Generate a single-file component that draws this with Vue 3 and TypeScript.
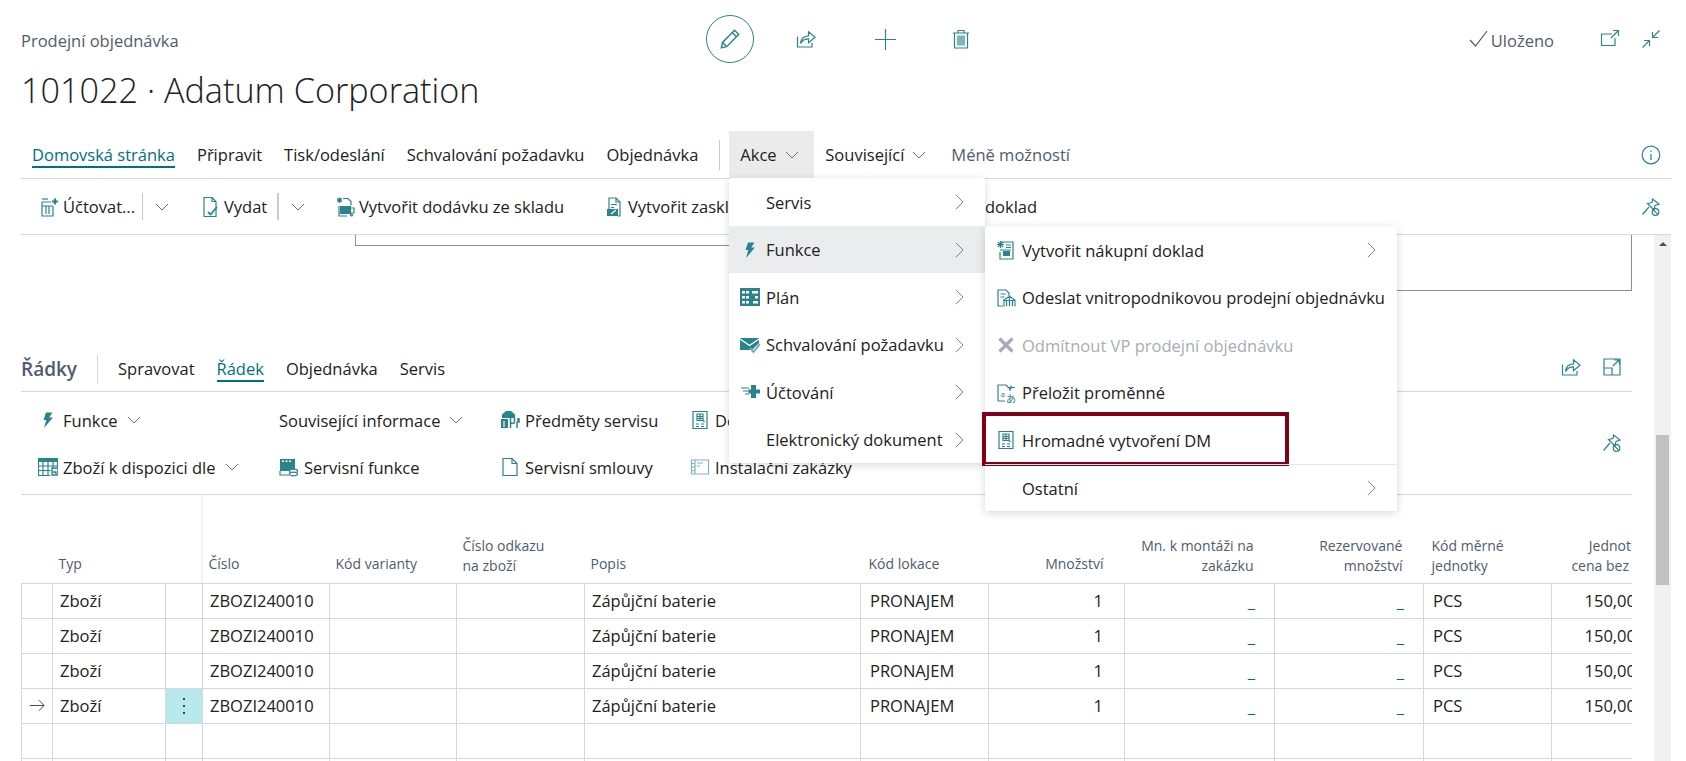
<script setup lang="ts">
const icons: Record<string, string> = {
  pencil: '<path d="M13.8 2.8l3.4 3.4L7.2 16.4l-4.4 1 1-4.5z"/><path d="M12 4.8l3.3 3.3M3.9 13l3.1 3.2"/>',
  share: '<path d="M1.500 7.500v10.500h14.500v-4"/><path d="M4.500 14.500c.4-4.800 3.600-7.400 8-7.600V2.800l6.500 5.400-6.500 5.400v-3.800c-3.400 0-6.200 1.300-8 4.700z"/>',
  plus: '<path d="M10 0v20M0 10h20"/>',
  trash: '<path d="M2 4h16M7 4V1.500h6V4M3.500 4v15h13V4M7 6.500v10M9 6.500v10M11 6.500v10M13 6.500v10"/>',
  check: '<path d="M1 11l5.500 6L18 2"/>',
  open: '<path d="M12 5H1.500v11.500H15V9"/><path d="M11 9l7-7M13 1.500h5.500V7"/>',
  collapse: '<path d="M18.500 1.500L11.500 8.500M11.500 3v5.500H17M1.500 18.500l7-7M3 11.500h5.500V17"/>',
  info: '<circle cx="10" cy="10" r="8.800"/><path d="M10 9v6M10 5.500v1.500"/>',
  pinoff: '<path d="M11.500 2l6.500 5-4 1.500-1 4.500-6.500-6.500 4.500-1z"/><path d="M8 10l-6.500 7.500"/><circle cx="14.500" cy="15" r="3.300"/><path d="M12.300 12.800l4.400 4.400"/>',
  expand: '<path d="M2 2h16v16H2zM2 11h8v7"/><path d="M11 9l6-6M12.500 2.800H17.300V7.500"/>',
  post: '<path d="M3 5h9M3 5v14h11V9"/><path d="M7 9v8M10 9v8M3 9h11"/><path d="M13 4.500h6M16 1.500v6" stroke-width="2.200"/><path d="M3 2h6"/>',
  ship: '<path d="M4 .5h8l4 4v15H4z"/><path d="M12 .5v4h4"/><path d="M8 15l2.500 2.500L17 10" stroke-width="1.800"/>',
  deliver: '<path d="M8 1.500h5l3 3v4M4 9v10h8"/><rect x="5" y="9" width="11" height="8" fill="#2b838b" stroke="none"/><path d="M4.500 .5v5.500M2 3.200h5M2.500 1.200l4 4M6.500 1.200l-4 4M16 11h3v5h-3"/><circle cx="16.500" cy="18" r="1"/>',
  whse: '<path d="M5 18V1h7l4 4v14h-2"/><path d="M12 1v4h4M7 7.500h6M7 10.500h3"/><rect x="3" y="12" width="11" height="7" fill="#2b838b" stroke="none"/><path d="M7 17l5-4" stroke="#fff"/>',
  bolt: '<path d="M8 2.500h6.500l-3.300 5h3.800L6 18l2.300-8H5.500z" fill="#2b838b" stroke="none"/>',
  plan: '<rect x="0" y="1" width="20" height="18" fill="#2b838b" stroke="none"/><g fill="#fff" stroke="none"><rect x="2" y="4" width="3" height="2.500"/><rect x="6" y="4" width="3" height="2.500"/><rect x="2" y="9" width="3" height="2.500"/><rect x="6" y="9" width="3" height="2.500"/><rect x="2" y="14" width="3" height="2.500"/><rect x="6" y="14" width="3" height="2.500"/><rect x="12" y="4" width="6" height="2.500"/><rect x="15" y="9" width="3" height="2.500"/><rect x="13" y="14" width="5" height="2.500"/></g>',
  approve: '<path d="M0 3h19v5l-7 7H0z" fill="#2b838b" stroke="none"/><path d="M0 4l9.500 6.500L19 4" stroke="#fff" stroke-width="1.300"/><path d="M10 13l3.500 4L20 9" stroke="#6fb4ba" stroke-width="2"/>',
  posting: '<path d="M1 6h8M3 9h6M5 12h4" stroke-width="1.200"/><path d="M11 3h5v4.500h4.500v4H16V16h-5v-4.500H8.500v-4H11z" fill="#2b838b" stroke="none"/>',
  newdoc: '<path d="M5 2h12v17H4v-7"/><path d="M10 5h5M10 7.500h5M4 10h11"/><rect x="7" y="11" width="7" height="5" fill="#2b838b" stroke="none"/><path d="M4.500 1v7M1 4.500h7M2 2l5 5M7 2L2 7" stroke-width="1.100"/>',
  intercompany: '<path d="M2 18V2h8l3 3v3M2 18h5"/><path d="M4.500 6h5M4.500 9h4"/><path d="M8 18.500v-6h11v6M13.500 12.500v-4M7 12.500l6.500-4 6 4" stroke-width="1.100"/><path d="M10.500 13v5M13.500 13v5M16.500 13v5" stroke-width="1.300"/>',
  cross: '<path d="M3.500 3.500l13 13M16.500 3.500l-13 13" stroke="#a7adb5" stroke-width="3.200"/>',
  translate: '<path d="M2 18V2h8l4 4v2M2 18h7"/><text x="4.500" y="14" font-size="8" font-family="Open Sans, sans-serif" fill="#2b838b" stroke="none">a</text><text x="10" y="19.500" font-size="10" font-family="Noto Sans CJK JP, sans-serif" fill="#2b838b" stroke="none">あ</text><path d="M15 2.500v4M13 4.500h6"/>',
  bulk: '<path d="M3 1.500h14v17H3z"/><path d="M7 4h6v6.500H7zM7 6.500h6M7 8.500h6M10 4v6.500M13 10.500l1.500 1.500M6 14h3M11 14h3M6 16.500h3M11 16.500h3"/>',
  avail: '<rect x="0" y="1" width="20" height="4" fill="#2b838b" stroke="none"/><path d="M0.500 5v13.500H12M0.500 9h19M.5 13.500h12M5 5v13.500M10 5v13.500M15 5v5M19.500 5v5"/><path d="M14 11h6v7h-6zM15 15h3v2" stroke-width="1.400"/>',
  service: '<rect x="1" y="2" width="15" height="12" fill="#2b838b" stroke="none"/><g fill="#fff" stroke="none"><rect x="3" y="3.500" width="2" height="1.500"/><rect x="6.500" y="3.500" width="2" height="1.500"/><rect x="10" y="3.500" width="2" height="1.500"/></g><path d="M1 14v4h9"/><ellipse cx="14.500" cy="14" rx="4" ry="1.800" fill="#fff"/><ellipse cx="14.500" cy="17" rx="4" ry="1.800" fill="#fff"/>',
  items: '<path d="M6 1L2 4.500V8h13V4.500L11 1z" fill="#2b838b" stroke="none"/><rect x="1" y="9" width="7" height="9" fill="#2b838b" stroke="none"/><path d="M10.500 8v10M14.500 8v3.500a2 2 0 0 1-4 0M18 8v3.500M17 12v6M19 8v4h-2" stroke-width="1.500"/><path d="M4 11v6" stroke="#fff"/>',
  contract: '<path d="M3 1.500h9l5 5v12H3z"/><path d="M12 1.500v5h5"/>',
  install: '<path d="M1.500 3h17v14h-17z" stroke="#7fb6ba"/><path d="M5 3v14M1.500 6.500H5M1.500 10H5M1.500 13.500H5M7 6h6M7 9h3" stroke="#7fb6ba"/>'
}

interface MenuRow { label: string; icon?: string; more?: boolean; disabled?: boolean; mark?: boolean; sep?: boolean }

const tabs = ['Domovská stránka', 'Připravit', 'Tisk/odeslání', 'Schvalování požadavku', 'Objednávka']
const lineTabs = ['Spravovat', 'Řádek', 'Objednávka', 'Servis']

const menuOne: MenuRow[] = [
  { label: 'Servis', more: true },
  { label: 'Funkce', icon: 'bolt', more: true },
  { label: 'Plán', icon: 'plan', more: true },
  { label: 'Schvalování požadavku', icon: 'approve', more: true },
  { label: 'Účtování', icon: 'posting', more: true },
  { label: 'Elektronický dokument', more: true }
]
const menuTwo: MenuRow[] = [
  { label: 'Vytvořit nákupní doklad', icon: 'newdoc', more: true },
  { label: 'Odeslat vnitropodnikovou prodejní objednávku', icon: 'intercompany' },
  { label: 'Odmítnout VP prodejní objednávku', icon: 'cross', disabled: true },
  { label: 'Přeložit proměnné', icon: 'translate' },
  { label: 'Hromadné vytvoření DM', icon: 'bulk', mark: true },
  { label: 'Ostatní', more: true, sep: true }
]
const lineActions = [
  { label: 'Funkce', icon: 'bolt', drop: true },
  { label: 'Související informace', drop: true },
  { label: 'Předměty servisu', icon: 'items' },
  { label: 'Dokumenty', icon: 'bulk' },
  { label: 'Zboží k dispozici dle', icon: 'avail', drop: true },
  { label: 'Servisní funkce', icon: 'service' },
  { label: 'Servisní smlouvy', icon: 'contract' },
  { label: 'Instalační zakázky', icon: 'install' }
]
const rows = [false, false, false, true]
</script>

<template>
  <div class="page">
    <header class="head">
      <div class="topline">
        <div class="doc-kind">Prodejní objednávka</div>
        <div class="doc-actions">
          <button class="round"><svg class="ic ic-24" viewBox="0 0 20 20" v-html="icons.pencil" /></button>
          <button class="flat"><svg class="ic" viewBox="0 0 20 20" v-html="icons.share" /></button>
          <button class="flat flat-plus"><svg class="ic ic-21" viewBox="0 0 20 20" v-html="icons.plus" /></button>
          <button class="flat"><svg class="ic" viewBox="0 0 20 20" v-html="icons.trash" /></button>
        </div>
        <div class="status">
          <svg class="ic ic-gray" viewBox="0 0 20 20" v-html="icons.check" />
          <span class="saved">Uloženo</span>
          <svg class="ic ic-open" viewBox="0 0 20 20" v-html="icons.open" />
          <svg class="ic" viewBox="0 0 20 20" v-html="icons.collapse" />
        </div>
      </div>
      <h1 class="title">101022 · Adatum Corporation</h1>

      <nav class="tabs">
        <span v-for="(t, i) in tabs" :key="t" class="tab"><span :class="{ active: i === 0 }">{{ t }}</span></span>
        <span class="tab-sep"></span>
        <span class="tab tab-open">Akce<svg class="chev" viewBox="0 0 14 8"><path d="M1 1l6 6 6-6" /></svg></span>
        <span class="tab">Související<svg class="chev" viewBox="0 0 14 8"><path d="M1 1l6 6 6-6" /></svg></span>
        <span class="tab tab-less">Méně možností</span>
        <svg class="ic ic-info" viewBox="0 0 20 20" v-html="icons.info" />
      </nav>

      <div class="cmdbar">
        <span class="cmd cmd-post"><svg class="ic" viewBox="0 0 20 20" v-html="icons.post" />Účtovat...</span>
        <span class="cmd-sep"></span><svg class="chev chev-split" viewBox="0 0 14 8"><path d="M1 1l6 6 6-6" /></svg>
        <span class="cmd cmd-ship"><svg class="ic" viewBox="0 0 20 20" v-html="icons.ship" />Vydat</span>
        <span class="cmd-sep cmd-sep-bold"></span><svg class="chev chev-split" viewBox="0 0 14 8"><path d="M1 1l6 6 6-6" /></svg>
        <span class="cmd cmd-deliver"><svg class="ic" viewBox="0 0 20 20" v-html="icons.deliver" />Vytvořit dodávku ze skladu</span>
        <span class="cmd cmd-whse"><svg class="ic" viewBox="0 0 20 20" v-html="icons.whse" />Vytvořit zaskladnění</span>
        <span class="cmd">doklad</span>
        <svg class="ic ic-pin" viewBox="0 0 20 20" v-html="icons.pinoff" />
      </div>
    </header>

    <div class="body">
      <main class="content">
        <div class="fields">
          <div class="fbox fbox-a"></div>
          <div class="fbox fbox-b"></div>
        </div>

        <div class="lines-head">
          <span class="lines-title">Řádky</span>
          <span class="lines-sep"></span>
          <span v-for="(t, i) in lineTabs" :key="t" class="tab"><span :class="{ active: i === 1 }">{{ t }}</span></span>
          <span class="lines-tools">
            <svg class="ic" viewBox="0 0 20 20" v-html="icons.share" />
            <svg class="ic" viewBox="0 0 20 20" v-html="icons.expand" />
          </span>
        </div>

        <div class="lines-cmds">
          <div class="lines-grid">
            <span v-for="a in lineActions" :key="a.label" class="la">
              <svg v-if="a.icon" class="ic" viewBox="0 0 20 20" v-html="icons[a.icon]" />
              {{ a.label }}<svg v-if="a.drop" class="chev chev-la" viewBox="0 0 14 8"><path d="M1 1l6 6 6-6" /></svg>
            </span>
          </div>
          <svg class="ic ic-pin" viewBox="0 0 20 20" v-html="icons.pinoff" />
        </div>

        <div class="grid-wrap">
          <table class="grid">
            <colgroup>
              <col class="c31" /><col class="c113" /><col class="c37" /><col class="c127" /><col class="c127" /><col class="c128" />
              <col class="c276" /><col class="c128" /><col class="c136" /><col class="c150" /><col class="c149" /><col class="c128" /><col class="c117" />
            </colgroup>
            <thead>
              <tr>
                <th></th><th>Typ</th><th class="freeze"></th>
                <th>Číslo</th><th>Kód varianty</th><th class="two">Číslo odkazu<br />na zboží</th>
                <th>Popis</th><th>Kód lokace</th>
                <th class="r">Množství</th><th class="r two">Mn. k montáži na<br />zakázku</th><th class="r two">Rezervované<br />množství</th>
                <th class="two">Kód měrné<br />jednotky</th><th class="r r-clip two">Jednotková<br />cena bez DPH</th>
              </tr>
            </thead>
            <tbody>
              <tr v-for="(cur, i) in rows" :key="i">
                <td class="mark">
                  <svg v-if="cur" class="arrow" viewBox="0 0 18 14"><path d="M1 7h16M11 1l6 6-6 6" /></svg>
                </td>
                <td>Zboží</td>
                <td :class="{ dots: cur }"><svg v-if="cur" class="kebab" viewBox="0 0 4 20"><circle cx="2" cy="3" r="1.100" /><circle cx="2" cy="10" r="1.100" /><circle cx="2" cy="17" r="1.100" /></svg></td>
                <td>ZBOZI240010</td><td></td><td></td>
                <td>Zápůjční baterie</td><td class="wide-pad">PRONAJEM</td>
                <td class="r">1</td><td class="r link">_</td><td class="r link">_</td>
                <td class="wide-pad">PCS</td><td class="r price">150,00</td>
              </tr>
              <tr v-for="n in 2" :key="'e' + n"><td v-for="m in 13" :key="m"></td></tr>
            </tbody>
          </table>
        </div>
      </main>
      <aside class="scrollbar">
        <i class="scroll-up"></i>
        <i class="scroll-thumb"></i>
      </aside>
    </div>

    <div class="menu menu-one">
      <div v-for="(m, i) in menuOne" :key="m.label" class="mi" :class="{ hot: i === 1 }">
        <svg v-if="m.icon" class="ic" viewBox="0 0 20 20" v-html="icons[m.icon]" /><span v-else class="ic"></span>
        <span>{{ m.label }}</span>
        <svg v-if="m.more" class="more" viewBox="0 0 10 18"><path d="M1 1l8 8-8 8" /></svg>
      </div>
    </div>
    <div class="menu menu-two">
      <div v-for="m in menuTwo" :key="m.label" class="mi" :class="{ off: m.disabled, sep: m.sep }">
        <svg v-if="m.icon" class="ic" viewBox="0 0 20 20" v-html="icons[m.icon]" /><span v-else class="ic"></span>
        <span>{{ m.label }}</span>
        <svg v-if="m.more" class="more" viewBox="0 0 10 18"><path d="M1 1l8 8-8 8" /></svg>
        <span v-if="m.mark" class="callout"></span>
      </div>
    </div>
  </div>
</template>

<style>
body { margin: 0; background: #fff; }
</style>

<style scoped>
.page {
  position: relative;
  width: 1686px;
  height: 761px;
  overflow: hidden;
  background: #fff;
  color: #212121;
  font-family: "Open Sans", "Liberation Sans", sans-serif;
  font-size: 16.5px;
  display: flex;
  flex-direction: column;
}
button { padding: 0; border: 0; background: none; }
.ic { width: 20px; height: 20px; flex: none; fill: none; stroke: #2b838b; stroke-width: 1.2; }
.ic-24 { width: 24px; height: 24px; }
.ic-21 { width: 21px; height: 21px; stroke-width: 1.1; }
.ic-gray { stroke: #505c6d; }
.head { flex: none; }
.topline { display: flex; align-items: center; height: 48px; padding: 15px 25px 0 21px; }
.doc-kind { width: 685px; color: #505c6d; padding-top: 3px; }
.doc-actions { display: flex; align-items: center; gap: 28px; }
.round { width: 48px; height: 48px; border: 1px solid #2b838b; border-radius: 50%; display: flex; align-items: center; justify-content: center; box-sizing: border-box; }
.flat { width: 48px; height: 48px; display: flex; align-items: center; justify-content: center; }
.flat-plus { margin: 0 0 0 3px; }
.status { margin-left: auto; display: flex; align-items: center; }
.saved { color: #505c6d; margin-left: 2px; padding-top: 3px; }
.ic-open { margin: 0 21px 0 46px; }
.title { margin: 4px 0 18px 21px; font-size: 34.2px; line-height: 46px; font-weight: 300; color: #212121; }
.tabs { display: flex; align-items: center; height: 47px; margin: 0 15px 0 21px; border-bottom: 1px solid #d5d7dd; }
.tab { padding: 0 11px; display: flex; align-items: center; white-space: pre; line-height: 22px; }
.active { color: #00717c; box-shadow: 0 2px 0 #00717c; display: block; }
.tab-sep { width: 1px; height: 30px; background: #c8cad0; margin: 0 9px 0 10px; }
.tab-open { align-self: stretch; background: #ebebec; width: 85px; box-sizing: border-box; }
.tab-less { color: #505c6d; margin-left: 3px; }
.chev { width: 14px; height: 8px; flex: none; fill: none; stroke: #707070; stroke-width: 1; margin-left: 8px; }
.ic-info { margin: 0 10px 0 auto; }
.cmdbar { display: flex; align-items: center; height: 55px; margin: 0 15px 0 21px; padding-left: 18px; border-bottom: 1px solid #d5d7dd; white-space: nowrap; }
.cmd { display: flex; align-items: center; gap: 4px; flex: none; }
.cmd-post { flex: 0 0 103px; }
.cmd-ship { flex: 0 0 77px; margin-left: 31px; }
.cmd-sep { width: 1px; height: 27px; background: #c8cad0; flex: none; }
.cmd-sep-bold { width: 2px; }
.chev-split { margin-left: 12px; }
.cmd-deliver { flex: 0 0 269px; margin-left: 30px; }
.cmd-whse { flex: 0 0 381px; }
.ic-pin { margin: 0 10px 0 auto; }
.body { flex: 1; display: flex; min-height: 0; margin-right: 15px; }
.content { width: 1611px; margin-left: 21px; flex: none; }
.fields { height: 111px; display: flex; align-items: flex-start; }
.fbox { box-sizing: border-box; border-right: 0; border-bottom: 1px solid #8a8f9c; }
.fbox-a { width: 400px; height: 11px; margin-left: 334px; border-left: 1px solid #8a8f9c; }
.fbox-b { flex: 1; height: 56px; margin-left: 200px; border-right: 1px solid #8a8f9c; }
.lines-head { display: flex; align-items: center; height: 45px; }
.lines-title { font-weight: 600; font-size: 19px; color: #505c6d; width: 76px; }
.lines-sep { width: 1px; height: 28px; background: #d5d7dd; margin-right: 9px; }
.lines-tools { margin-left: auto; display: flex; gap: 21px; padding: 0 10px 4px 0; }
.lines-cmds { display: flex; align-items: center; height: 102px; border-top: 1px solid #d5d7dd; border-bottom: 1px solid #d5d7dd; padding-left: 17px; }
.lines-grid { display: grid; grid-template-columns: 241px 221px 190px auto; grid-auto-rows: 47px; align-items: center; padding-top: 1px; }
.la { display: flex; align-items: center; gap: 5px; white-space: nowrap; }
.chev-la { margin-left: 4px; }
.grid-wrap { width: 1611px; overflow: hidden; }
.grid { border-collapse: collapse; table-layout: fixed; width: 1648px; }
.c31 { width: 31px; } .c113 { width: 113px; } .c37 { width: 37px; } .c127 { width: 127px; }
.c128 { width: 128px; } .c276 { width: 276px; } .c136 { width: 136px; } .c150 { width: 150px; }
.c149 { width: 149px; } .c117 { width: 117px; }
th { height: 88px; box-sizing: border-box; padding: 0 6px 9px; vertical-align: bottom; text-align: left; font-weight: 400; font-size: 14px; line-height: 20px; color: #505c6d; border-bottom: 1px solid #d5d7dd; white-space: nowrap; }
th.two { padding-bottom: 7px; }
th:nth-child(8), th:nth-child(12) { padding-left: 8px; }
th.freeze { box-shadow: inset -2px 0 #f2f2f2; }
td { height: 35px; padding: 0 7px; border: 1px solid #d5d7dd; box-sizing: border-box; white-space: nowrap; }
td.wide-pad { padding-left: 9px; }
th.r, td.r { text-align: right; padding-right: 21px; }
th.r-clip { padding-right: 7px; }
td.price { padding-right: 32px; }
td.link { color: #00717c; padding-top: 2px; padding-right: 19px; }
td.mark { padding: 0; text-align: center; }
td.dots { background: #b7e8ec; padding: 0; text-align: center; }
.arrow { width: 16px; height: 13px; fill: none; stroke: #333; stroke-width: 1; display: block; margin: auto; }
.kebab { width: 4px; height: 20px; fill: #222; display: block; margin: auto; }
.scrollbar { width: 17px; margin-left: 22px; background: #f1f1f1; display: flex; flex-direction: column; align-items: center; flex: none; }
.scroll-up { width: 0; height: 0; border-left: 4px solid transparent; border-right: 4px solid transparent; border-bottom: 4px solid #505050; margin-top: 7px; }
.scroll-thumb { width: 13px; height: 150px; background: #c1c1c1; margin-top: 189px; }
.menu { position: absolute; background: #fff; box-shadow: 0 2px 8px rgba(0, 0, 0, .16); border-radius: 2px; }
.menu-one { left: 729px; top: 178px; width: 256px; }
.menu-two { left: 985px; top: 226px; width: 412px; }
.mi { position: relative; display: flex; align-items: center; gap: 6px; height: 47.5px; padding: 1px 21px 0 11px; white-space: nowrap; box-sizing: border-box; }
.hot { background: #ebecee; }
.off { color: #a7adb5; }
.sep { border-top: 1px solid #e6e6e6; }
.more { width: 9px; height: 16px; margin-left: auto; fill: none; stroke: #707070; stroke-width: 1; flex: none; }
.callout { position: absolute; left: -3px; top: -4px; width: 307px; height: 54px; box-sizing: border-box; border: 4px solid #80001a; }
</style>
